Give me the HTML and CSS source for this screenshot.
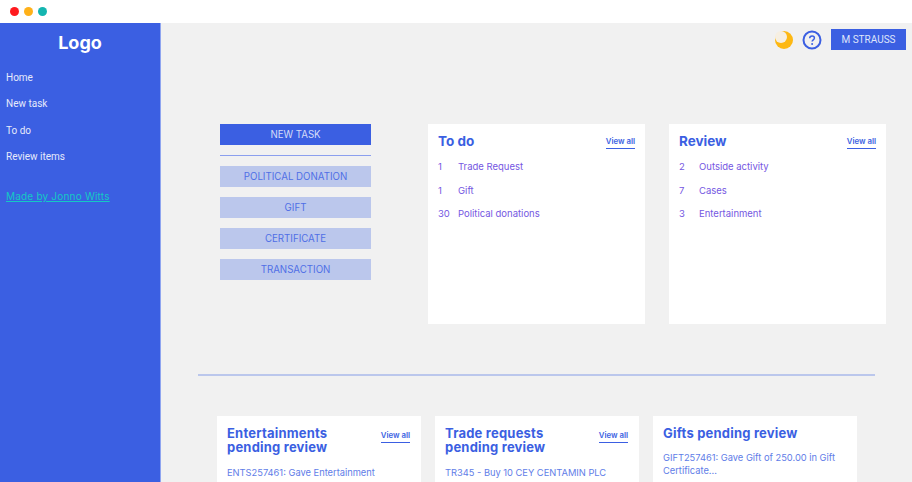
FILE: index.html
```html
<!DOCTYPE html>
<html lang="en">
<head>
  <meta charset="UTF-8" />
  <title>Dashboard</title>
  <link rel="stylesheet" href="styles.css">
</head>
<body>

<div class="window-bar">
  <span class="dot dot-red"></span>
  <span class="dot dot-yellow"></span>
  <span class="dot dot-teal"></span>
</div>

<div class="app">
  <nav class="sidebar">
    <div class="logo">Logo</div>
    <a class="nav-link" href="#">Home</a>
    <a class="nav-link" href="#">New task</a>
    <a class="nav-link" href="#">To do</a>
    <a class="nav-link" href="#">Review items</a>
    <a class="credit" href="#">Made by Jonno Witts</a>
  </nav>

  <main class="content">
    <header class="topbar">
      <svg class="moon" width="20" height="20" viewBox="0 0 20 20">
        <circle cx="10" cy="10" r="9" fill="#fdb813"/>
        <circle cx="7" cy="7" r="6" fill="#f6efe2"/>
      </svg>
      <svg class="help" width="20" height="20" viewBox="0 0 20 20">
        <circle cx="10" cy="10" r="8.500" fill="none" stroke="#3b5fe2" stroke-width="2"/>
        <path d="M7.700 8.200c0-1.500 1-2.300 2.400-2.300s2.300.8 2.300 2c0 1.900-2.300 1.900-2.300 3.700" fill="none" stroke="#3b5fe2" stroke-width="1.500"/>
        <circle cx="10.100" cy="14" r="1" fill="#3b5fe2"/>
      </svg>
      <button class="user-btn">M STRAUSS</button>
    </header>

    <section class="top-row">
      <div class="actions">
        <button class="action action-main">NEW TASK</button>
        <hr class="actions-rule" />
        <button class="action">POLITICAL DONATION</button>
        <button class="action">GIFT</button>
        <button class="action">CERTIFICATE</button>
        <button class="action">TRANSACTION</button>
      </div>

      <div class="card card-tall">
        <div class="card-head">
          <h2>To do</h2>
          <a class="view-all" href="#">View all</a>
        </div>
        <div class="count-row"><span class="count">1</span><span>Trade Request</span></div>
        <div class="count-row"><span class="count">1</span><span>Gift</span></div>
        <div class="count-row"><span class="count">30</span><span>Political donations</span></div>
      </div>

      <div class="card card-tall">
        <div class="card-head">
          <h2>Review</h2>
          <a class="view-all" href="#">View all</a>
        </div>
        <div class="count-row"><span class="count">2</span><span>Outside activity</span></div>
        <div class="count-row"><span class="count">7</span><span>Cases</span></div>
        <div class="count-row"><span class="count">3</span><span>Entertainment</span></div>
      </div>
    </section>

    <hr class="divider" />

    <section class="bottom-row">
      <div class="card card-low">
        <div class="card-head">
          <h3 class="narrow">Entertainments pending review</h3>
          <a class="view-all" href="#">View all</a>
        </div>
        <p class="pending">ENTS257461: Gave Entertainment</p>
      </div>
      <div class="card card-low">
        <div class="card-head">
          <h3 class="narrow">Trade requests pending review</h3>
          <a class="view-all" href="#">View all</a>
        </div>
        <p class="pending">TR345 - Buy 10 CEY CENTAMIN PLC</p>
      </div>
      <div class="card card-low">
        <div class="card-head">
          <h3>Gifts pending review</h3>
        </div>
        <p class="pending pending-tight">GIFT257461: Gave Gift of 250.00 in Gift Certificate...</p>
      </div>
    </section>
  </main>
</div>

</body>
</html>
```

FILE: styles.css
```css
html, body {
  margin: 0;
  padding: 0;
  height: 482px;
  overflow: hidden;
  background-color: #f1f1f1;
  font-family: "Roboto", "Liberation Sans", sans-serif;
}

.window-bar {
  height: 23px;
  background-color: #fff;
  display: flex;
  align-items: center;
  gap: 5px;
  padding-left: 10px;
}

.dot {
  width: 9px;
  height: 9px;
  border-radius: 50%;
}

.dot-red { background-color: #ff1a1f; }
.dot-yellow { background-color: #ffb119; }
.dot-teal { background-color: #14b5b0; }

.app {
  display: flex;
  height: 459px;
}

.sidebar {
  flex: 0 0 161px;
  box-sizing: border-box;
  background-color: #3b5fe2;
  border-right: 1px solid #8fa5f0;
  padding: 9px 6px 0;
  display: flex;
  flex-direction: column;
  align-items: flex-start;
}

.logo {
  align-self: center;
  color: #fff;
  font-family: "Inter", sans-serif;
  font-size: 18px;
  font-weight: 700;
  line-height: 22px;
  margin-bottom: 17px;
}

.nav-link {
  color: #e6eafb;
  font-size: 10px;
  line-height: 13px;
  text-decoration: none;
  margin-bottom: 13.300px;
}

.credit {
  color: #14c9c4;
  font-family: "Inter", sans-serif;
  font-size: 10px;
  line-height: 13px;
  letter-spacing: 0.200px;
  margin-top: 14px;
}

.content {
  flex: 1;
  min-width: 0;
  padding: 6px 6px 0 0;
}

.topbar {
  display: flex;
  justify-content: flex-end;
  align-items: center;
  height: 21px;
}

.moon { margin-right: 8px; }
.help { margin-right: 9px; }

.user-btn {
  width: 75px;
  height: 21px;
  padding: 0;
  border: none;
  background-color: #3b5fe2;
  color: #dfe5fb;
  font-family: "Roboto", sans-serif;
  font-size: 10px;
}

.top-row {
  display: flex;
  align-items: flex-start;
  margin: 74px 0 0 59px;
}

.actions {
  flex: none;
  width: 151px;
  margin-right: 57px;
  display: flex;
  flex-direction: column;
}

.action {
  height: 21px;
  margin-bottom: 10px;
  padding: 0 0 1px;
  border: none;
  background-color: #bbc7ec;
  color: #4f6fe6;
  font-family: "Inter", sans-serif;
  font-size: 9.700px;
}

.action-main {
  margin-bottom: 0;
  background-color: #3b5fe2;
  color: #d5dcf8;
}

.actions-rule {
  width: 100%;
  margin: 10px 0;
  border: none;
  border-top: 1px solid #8b9fee;
}

.card {
  background-color: #fff;
  box-sizing: border-box;
}

.card-tall {
  flex: none;
  width: 217px;
  height: 200px;
  padding: 9px 10px 0;
  margin-right: 24px;
}

.card-head {
  display: flex;
  justify-content: space-between;
  align-items: flex-start;
}

h2, h3 {
  margin: 0;
  color: #3b5fe2;
  font-family: "Inter", sans-serif;
  font-weight: 700;
}

h2 {
  font-size: 13.500px;
  line-height: 17px;
  margin-bottom: 11px;
}

h3 {
  font-size: 13px;
  line-height: 13.500px;
  letter-spacing: 0.200px;
}

.narrow {
  width: 130px;
}

.view-all {
  color: #3b5fe2;
  font-family: "Inter", sans-serif;
  font-size: 7.800px;
  font-weight: 600;
  line-height: 10px;
  padding-bottom: 2px;
  margin-top: 3px;
  text-decoration: none;
  border-bottom: 1px solid #3b5fe2;
}

.count-row {
  display: flex;
  height: 23.500px;
  color: #7557e2;
  font-family: "Inter", sans-serif;
  font-size: 9.500px;
  line-height: 12px;
}

.count {
  flex: 0 0 20px;
}

.divider {
  margin: 50px 31px 0 37px;
  border: none;
  border-top: 2px solid #bbc7ec;
}

.bottom-row {
  display: flex;
  gap: 14px;
  margin: 40px 0 0 56px;
}

.card-low {
  width: 204px;
  height: 66px;
  padding: 11px 11px 0 10px;
}

.pending {
  margin: 12px 0 0;
  color: #5f7de8;
  font-family: "Inter", sans-serif;
  font-size: 9.300px;
  line-height: 13.500px;
}

.pending-tight {
  margin-top: 10px;
  line-height: 13px;
}
```
